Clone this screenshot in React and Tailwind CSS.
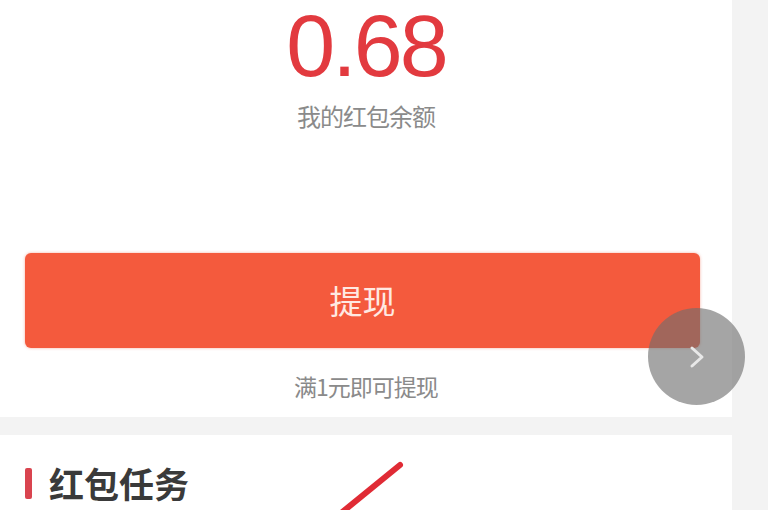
import React from "react";

export default function App() {
  return (
    <div
      className="relative flex w-[768px] h-[510px] overflow-hidden bg-[#f3f3f3]"
      style={{ fontFamily: '"Noto Sans CJK SC", "Liberation Sans", sans-serif' }}
    >
      <div className="flex flex-col w-[732px]">
        <div className="flex flex-col items-center bg-white h-[417px]">
          <div
            className="text-[88px] leading-none text-[#e23a3f] tracking-[-3px] mt-[2px]"
            style={{ fontFamily: '"Liberation Sans", sans-serif' }}
          >
            0.68
          </div>
          <div className="mt-[12px] text-[24px] leading-[28px] text-[#8a8a8a] tracking-[-1px]">我的红包余额</div>
          <div className="self-start ml-[25px] mt-[123px] w-[675px] h-[95px] rounded-[6px] bg-[#f45a3d] shadow-[0_0_3px_rgba(240,90,60,0.5)] flex items-center justify-center">
            <span className="text-[33px] text-[#ffe9e2]">提现</span>
          </div>
          <div className="mt-[25px] text-[23px] leading-[26px] text-[#8a8a8a] tracking-[-1px]">满1元即可提现</div>
        </div>
        <div className="mt-[18px] flex-1 bg-white relative">
          <div className="flex items-center mt-[28px] ml-[25px] gap-[17px]">
            <div className="w-[7px] h-[31px] bg-[#d9444f] rounded-[2px]" />
            <div className="text-[35px] leading-[40px] font-bold text-[#3a3a3a]">红包任务</div>
          </div>
          <svg className="absolute left-[320px] top-[25px]" width="90" height="60" viewBox="0 0 90 60">
            <line x1="80" y1="5" x2="15" y2="58" stroke="#e02b35" strokeWidth="6" strokeLinecap="round" />
          </svg>
        </div>
      </div>
      <div className="flex-1" />
      <div className="absolute left-[648px] top-[308px] w-[97px] h-[97px] rounded-full bg-[rgba(110,110,110,0.62)] flex items-center justify-center">
        <svg width="24" height="30" viewBox="0 0 24 30">
          <path d="M7 6 L17 15 L7 24" fill="none" stroke="#e8e8e8" strokeWidth="3" strokeLinecap="round" strokeLinejoin="round" />
        </svg>
      </div>
    </div>
  );
}
